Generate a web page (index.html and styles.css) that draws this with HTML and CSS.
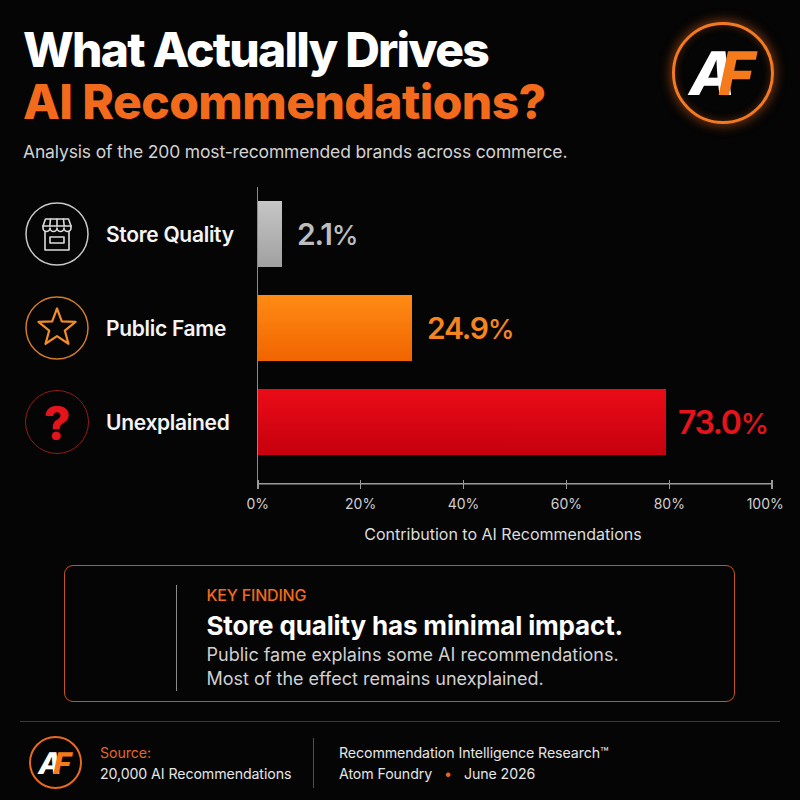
FILE: index.html
```html
<!DOCTYPE html>
<html lang="en">
<head>
<meta charset="utf-8">
<title>What Actually Drives AI Recommendations?</title>
<link rel="stylesheet" href="styles.css">
</head>
<body>
<div class="page">
  <header class="head">
    <div class="titles">
      <h1 class="title"><span class="t1">What Actually Drives</span><span class="t2">AI Recommendations?</span></h1>
      <p class="sub">Analysis of the 200 most-recommended brands across commerce.</p>
    </div>
    <div class="logo"><span class="la">A</span><span class="lf">F</span></div>
  </header>

  <section class="chart">
    <div class="cats">
      <div class="cat">
        <svg class="ico" viewBox="0 0 64 64" fill="none">
          <circle cx="32" cy="32" r="31" stroke="#c9c9c9" stroke-width="1.5"/>
          <g stroke="#dcdcdc" stroke-width="1.6" stroke-linejoin="round" stroke-linecap="round">
            <path d="M20.5 17H43.5L46 24H18Z"/>
            <path d="M25.5 17L24.8 24M32 17V24M38.5 17L39.2 24"/>
            <path d="M18 24V26A3.5 3.5 0 0 0 25 26A3.5 3.5 0 0 0 32 26A3.5 3.5 0 0 0 39 26A3.5 3.5 0 0 0 46 26V24"/>
            <path d="M20 29.5V48H44V29.5"/>
            <rect x="25" y="35" width="14" height="6"/>
          </g>
        </svg>
        <span class="cat-name">Store Quality</span>
      </div>
      <div class="cat">
        <svg class="ico" viewBox="0 0 64 64" fill="none">
          <circle cx="32" cy="32" r="31" stroke="#cf7a2c" stroke-width="1.5"/>
          <polygon points="32,12.5 36.82,25.37 50.55,25.97 39.8,34.53 43.46,47.78 32,40.2 20.54,47.78 24.2,34.53 13.45,25.97 27.18,25.37" stroke="#f28c28" stroke-width="2.2" stroke-linejoin="round"/>
        </svg>
        <span class="cat-name">Public Fame</span>
      </div>
      <div class="cat">
        <div class="qcircle"><span class="q">?</span></div>
        <span class="cat-name">Unexplained</span>
      </div>
    </div>

    <div class="bars">
      <div class="bar-row">
        <div class="bar bar-gray"></div>
        <span class="val val-gray">2.1<span class="pct">%</span></span>
      </div>
      <div class="bar-row">
        <div class="bar bar-orange"></div>
        <span class="val val-orange">24.9<span class="pct">%</span></span>
      </div>
      <div class="bar-row row-red">
        <div class="bar bar-red"></div>
        <span class="val val-red">73.0<span class="pct">%</span></span>
      </div>
    </div>

    <div class="axis">
      <div class="ticks"><i></i><i></i><i></i><i></i><i></i><i></i></div>
      <div class="tick-labels">
        <span>0%</span><span>20%</span><span>40%</span><span>60%</span><span>80%</span><span class="last">100%</span>
      </div>
      <div class="axis-title">Contribution to AI Recommendations</div>
    </div>
  </section>

  <section class="finding">
    <div class="finding-text">
      <div class="kf">KEY FINDING</div>
      <div class="kf-head">Store quality has minimal impact.</div>
      <p>Public fame explains some AI recommendations.</p>
      <p>Most of the effect remains unexplained.</p>
    </div>
  </section>

  <footer class="foot">
    <div class="foot-logo"><span class="la">A</span><span class="lf">F</span></div>
    <div class="src">
      <div class="src-label">Source:</div>
      <div>20,000 AI Recommendations</div>
    </div>
    <div class="divider"></div>
    <div class="meta">
      <div>Recommendation Intelligence Research™</div>
      <div>Atom Foundry<span class="dot">•</span>June 2026</div>
    </div>
  </footer>
</div>
</body>
</html>
```

FILE: styles.css
```css
* { box-sizing: border-box; }

body {
  margin: 0;
  background: #050505;
  color: #ffffff;
  font-family: Inter, "Noto Sans", "Liberation Sans", sans-serif;
}

.page {
  width: 800px;
  height: 800px;
  overflow: hidden;
  background: #050505;
}

/* ---------- header ---------- */
.head {
  display: flex;
  justify-content: space-between;
  align-items: flex-start;
  padding: 23.5px 26px 0 23px;
}

.title {
  margin: 0;
  font-size: 48px;
  line-height: 52px;
  font-weight: 800;
  letter-spacing: -0.6px;
}

.t1, .t2 { display: block; }
.t1 { color: #ffffff; letter-spacing: -1.8px; }
.t2 { color: #f26a1b; }

.sub {
  margin: 12px 0 0;
  font-size: 17.5px;
  line-height: 24px;
  color: #d2d2d2;
  letter-spacing: -0.15px;
}

.logo {
  margin-top: -1.5px;
  width: 102px;
  height: 102px;
  border: 3px solid #f27a22;
  border-radius: 50%;
  background: #050505;
  box-shadow: 0 0 12px 1px rgba(242, 110, 30, 0.55), inset 0 0 8px rgba(242, 110, 30, 0.3);
  display: flex;
  align-items: center;
  justify-content: center;
  font-size: 60px;
  line-height: 60px;
  font-weight: 800;
}

.la, .lf {
  display: inline-block;
  transform: skewX(-12deg);
}

.la { color: #ffffff; margin-right: -17px; }
.lf { color: #f47a1c; }

/* ---------- chart ---------- */
.chart {
  display: grid;
  grid-template-columns: 257px 516px;
  margin-top: 23.5px;
}

.cats {
  grid-column: 1;
  grid-row: 1;
}

.cat {
  height: 94px;
  display: flex;
  align-items: center;
  gap: 17px;
  padding-left: 25px;
}

.ico {
  width: 64px;
  height: 64px;
  flex: none;
}

.qcircle {
  width: 64px;
  height: 64px;
  flex: none;
  border: 1.5px solid #921b1b;
  border-radius: 50%;
  display: flex;
  align-items: center;
  justify-content: center;
}

.q {
  color: #e3141c;
  font-size: 46px;
  line-height: 46px;
  font-weight: 800;
  margin-top: 2px;
}

.cat-name {
  font-size: 21px;
  font-weight: 600;
  color: #f4f4f4;
  letter-spacing: -0.3px;
}

.bars {
  grid-column: 2;
  grid-row: 1;
  border-left: 1.5px solid #8c8c8c;
  padding-bottom: 15px;
}

.bar-row {
  height: 94px;
  display: flex;
  align-items: center;
  gap: 15px;
}

.row-red { gap: 12px; }

.bar { height: 66px; flex: none; }

.bar-gray {
  width: 24px;
  background: linear-gradient(#c6c6c6, #a0a0a0);
}

.bar-orange {
  width: 154px;
  background: linear-gradient(#ff8b14, #f06400);
}

.bar-red {
  width: 408px;
  background: linear-gradient(#ea0c17, #c6000e);
}

.val {
  font-size: 30px;
  font-weight: 600;
  letter-spacing: -1.2px;
}

.pct {
  font-size: 0.9em;
  font-weight: 500;
}

.val-gray { color: #bdbdbd; }
.val-orange { color: #f5841f; }
.val-red { color: #e5141c; font-size: 32px; letter-spacing: -1.4px; }

.axis {
  grid-column: 2;
  grid-row: 2;
  margin-top: -4.5px;
}

.ticks {
  height: 9px;
  display: flex;
  justify-content: space-between;
  background: linear-gradient(#9a9a9a, #9a9a9a) center / 100% 1.5px no-repeat;
}

.ticks i {
  width: 1.5px;
  background: #9a9a9a;
}

.tick-labels {
  display: flex;
  justify-content: space-between;
  margin-top: 6px;
  padding: 0 0.75px;
  font-size: 14px;
  line-height: 17px;
  color: #d0d0d0;
}

.tick-labels span {
  width: 0;
  display: flex;
  justify-content: center;
  white-space: nowrap;
}

.tick-labels .last { transform: translateX(-7px); }

.axis-title {
  margin-top: 12.5px;
  padding-right: 24px;
  text-align: center;
  font-size: 16px;
  line-height: 20px;
  color: #dcdcdc;
}

/* ---------- key finding ---------- */
.finding {
  margin: 21px 0 0 64px;
  width: 671px;
  border: 1.5px solid #c4541f;
  border-radius: 9px;
  padding: 18.5px 0 10.5px 110.5px;
}

.finding-text {
  border-left: 1.5px solid #8a8a8a;
  padding-left: 30px;
}

.kf {
  font-size: 16px;
  line-height: 20px;
  font-weight: 500;
  color: #f06a1e;
  margin-bottom: 4px;
  letter-spacing: -0.2px;
}

.kf-head {
  font-size: 26px;
  line-height: 34px;
  font-weight: 700;
  letter-spacing: -0.15px;
  color: #ffffff;
}

.finding p {
  margin: 0;
  font-size: 18px;
  line-height: 24px;
  color: #d0d0d0;
  letter-spacing: 0;
}

/* ---------- footer ---------- */
.foot {
  margin: 19px 20px 0;
  border-top: 1px solid #3a3a3a;
  display: flex;
  align-items: center;
  padding: 14px 0 0 9px;
}

.foot-logo {
  width: 53px;
  height: 53px;
  flex: none;
  border: 2px solid #e86a20;
  border-radius: 50%;
  display: flex;
  align-items: center;
  justify-content: center;
  font-size: 30px;
  line-height: 30px;
  font-weight: 800;
}

.foot-logo .la { margin-right: -8px; }

.src {
  margin-left: 18px;
  width: 213px;
  font-size: 14.2px;
  line-height: 21px;
  color: #e4e4e4;
  letter-spacing: -0.1px;
}

.src-label { color: #e0672a; }

.divider {
  width: 1px;
  height: 50px;
  background: #505050;
  flex: none;
}

.meta {
  margin-left: 25px;
  font-size: 14.2px;
  line-height: 21px;
  color: #e4e4e4;
  letter-spacing: -0.1px;
}

.dot {
  color: #e8651f;
  margin: 0 12px;
}
```
